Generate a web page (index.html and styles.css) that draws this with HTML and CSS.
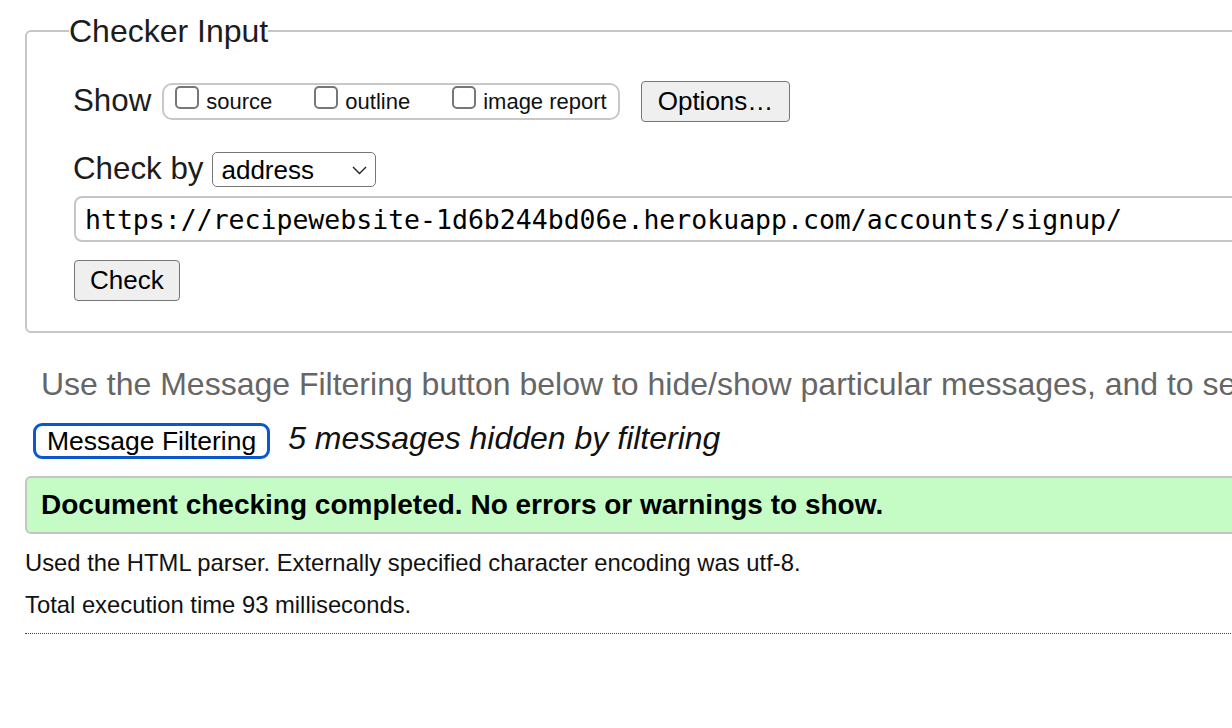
FILE: index.html
```html
<!DOCTYPE html>
<html lang="en">
<head>
<meta charset="utf-8">
<title>Nu Html Checker</title>
<link rel="stylesheet" href="styles.css">
</head>
<body>
<div class="page">
  <fieldset class="checker">
    <legend class="checker-title">Checker Input</legend>
    <div class="show-row">
      <span class="row-label show-label">Show</span>
      <div class="toggles">
        <label class="toggle"><input class="box" type="checkbox"><span class="toggle-text">source</span></label>
        <label class="toggle"><input class="box" type="checkbox"><span class="toggle-text">outline</span></label>
        <label class="toggle"><input class="box" type="checkbox"><span class="toggle-text">image report</span></label>
      </div>
      <button class="btn options-btn" type="button">Options…</button>
    </div>
    <div class="checkby-row">
      <label class="row-label checkby-label">Check by</label>
      <span class="select-wrap">
        <select class="select"><option>address</option></select>
        <svg class="chevron" width="15" height="9" viewBox="0 0 15 9"><polyline points="1,1 7.5,7.5 14,1" fill="none" stroke="#222" stroke-width="1.4"/></svg>
      </span>
    </div>
    <input class="url" type="text" value="https://recipewebsite-1d6b244bd06e.herokuapp.com/accounts/signup/">
    <div class="submit-row"><button class="btn check-btn" type="button">Check</button></div>
  </fieldset>

  <p class="intro">Use the Message Filtering button below to hide/show particular messages, and to see total counts of errors and warnings.</p>

  <div class="filter-row">
    <button class="filter-btn" type="button">Message Filtering</button>
    <em class="hidden-count">5 messages hidden by filtering</em>
  </div>

  <div class="success">Document checking completed. No errors or warnings to show.</div>

  <p class="meta">Used the HTML parser. Externally specified character encoding was utf-8.</p>
  <p class="meta">Total execution time 93 milliseconds.</p>
  <hr class="end">
</div>
</body>
</html>
```

FILE: styles.css
```css
html, body {
  margin: 0;
  padding: 0;
  overflow: hidden;
  background: #fff;
}

body {
  font-family: "Liberation Sans", Arial, Helvetica, sans-serif;
  color: #111;
}

.page {
  width: 1600px;
  padding: 13px 0 0 25px;
}

.checker {
  margin: 0;
  border: 2px solid #c6c6c6;
  border-radius: 6px;
  padding: 0 0 30px 46px;
}

.checker-title {
  padding: 0;
  margin-left: -4px;
  font-size: 32px;
  line-height: 36px;
  color: #1c1c1c;
}

.show-row {
  display: flex;
  align-items: flex-start;
  margin-top: 32px;
  height: 41px;
}

.row-label {
  font-size: 31.3px;
  line-height: 36px;
  color: #1c1c1c;
}

.show-label {
  margin-top: 2px;
}

.checkby-label {
  margin-top: 5px;
}

.toggles {
  display: flex;
  gap: 42px;
  box-sizing: border-box;
  height: 37px;
  margin: 2px 0 0 11px;
  padding: 0 11px;
  border: 2px solid #c8c8c8;
  border-radius: 10px;
}

.toggle {
  display: flex;
  align-items: flex-start;
}

.box {
  appearance: none;
  -webkit-appearance: none;
  width: 24px;
  height: 23px;
  margin: 1px 0 0 0;
  border: 2px solid #777;
  border-radius: 5px;
  background: #fff;
  box-sizing: border-box;
}

.toggle-text {
  margin: 3.5px 0 0 7px;
  font-size: 22px;
  line-height: 26px;
  color: #111;
}

.btn {
  height: 41px;
  padding: 0 15px;
  border: 1px solid #767676;
  border-radius: 4px;
  background: #efefef;
  font-family: "Liberation Sans", Arial, sans-serif;
  font-size: 26px;
  color: #000;
}

.options-btn {
  margin-left: 21px;
  padding: 0 16px;
}

.checkby-row {
  display: flex;
  align-items: flex-start;
  margin-top: 24px;
}

.select-wrap {
  position: relative;
  margin: 6px 0 0 9px;
}

.select {
  appearance: none;
  -webkit-appearance: none;
  display: block;
  box-sizing: border-box;
  width: 164px;
  height: 35px;
  padding: 0 36px 0 8px;
  border: 1px solid #767676;
  border-radius: 5px;
  background: #fff;
  font-family: "Liberation Sans", Arial, sans-serif;
  font-size: 26px;
  color: #000;
}

.chevron {
  position: absolute;
  right: 9px;
  top: 14px;
  pointer-events: none;
}

.url {
  display: block;
  box-sizing: border-box;
  width: 1500px;
  height: 46px;
  margin: 9px 0 0 1px;
  padding: 0 9px;
  border: 2px solid #c6c6c6;
  border-radius: 8px;
  font-family: "DejaVu Sans Mono", "Liberation Mono", monospace;
  font-size: 26.5px;
  color: #000;
  background: #fff;
}

.submit-row {
  margin: 18px 0 0 1px;
}

.intro {
  margin: 32px 0 0 16px;
  font-size: 32px;
  line-height: 38px;
  color: #666;
  white-space: nowrap;
}

.filter-row {
  display: flex;
  align-items: flex-start;
  margin: 20px 0 0 8px;
}

.filter-btn {
  height: 36px;
  padding: 0 11px;
  border: 3px solid #0b57d0;
  border-radius: 9px;
  background: #fff;
  font-family: "Liberation Sans", Arial, sans-serif;
  font-size: 26.5px;
  color: #000;
}

.hidden-count {
  margin: 4px 0 0 18px;
  font-size: 32px;
  line-height: 22px;
  color: #111;
}

.success {
  display: flex;
  align-items: center;
  box-sizing: border-box;
  height: 58px;
  margin-top: 17px;
  padding: 0 14px;
  border: 2px solid #c4c4c4;
  border-radius: 6px;
  background: #c5fcc5;
  font-size: 28px;
  font-weight: bold;
  color: #000;
}

.meta {
  margin: 15px 0 0 0;
  font-size: 23.8px;
  line-height: 27px;
  color: #111;
}

.end {
  height: 0;
  margin: 15px 0 0 0;
  border: 0;
  border-top: 1px dotted #444;
}
```
